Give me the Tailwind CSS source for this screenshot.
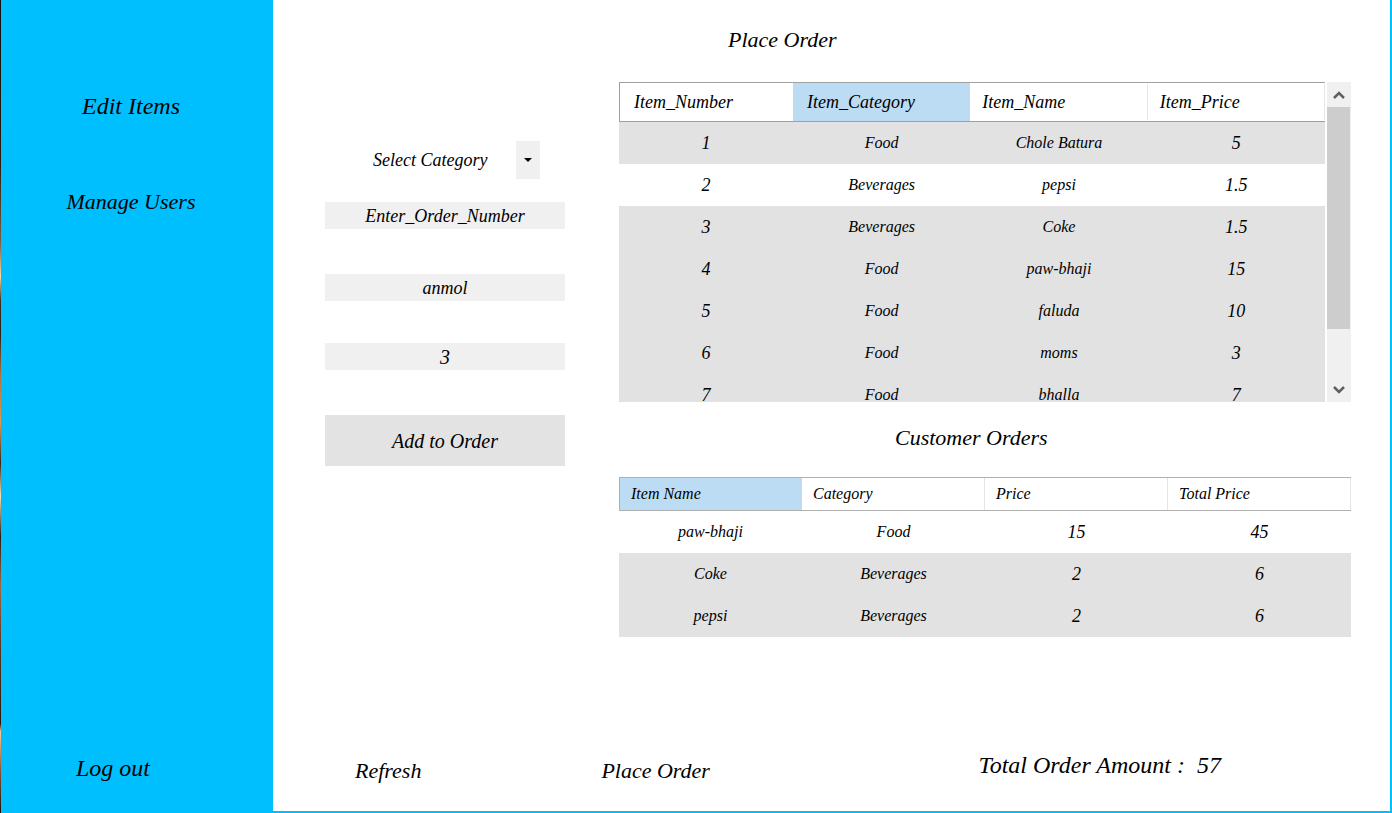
<!DOCTYPE html>
<html lang="en">
<head>
<meta charset="utf-8">
<title>Place Order</title>
<script src="https://cdn.jsdelivr.net/npm/@tailwindcss/browser@4"></script>
</head>
<body class="flex min-h-screen bg-white font-['Liberation_Serif',serif] italic text-black">
  <div class="w-px shrink-0 bg-[linear-gradient(#14100c_0%,#2a1c10_20%,#806040_30%,#ffd9a0_34%,#40301f_37%,#2a2018_41%,#b0703c_46%,#e09850_52%,#3a2418_57%,#ffe0b0_61%,#2a1a14_66%,#a06840_72%,#5a3420_80%,#2a1810_89%,#ffc890_90%,#8a5030_95%,#1a1210_100%)]"></div>
  <aside class="flex w-[272px] shrink-0 flex-col items-start bg-[#00bfff] pt-[90px] pb-[29px] text-[22px] leading-8">
    <nav class="flex flex-col gap-16 self-stretch pr-3">
      <a href="#items" class="text-center text-2xl">Edit Items</a>
      <a href="#users" class="text-center">Manage Users</a>
    </nav>
    <button type="button" class="mt-auto ml-[75px] text-2xl italic">Log out</button>
  </aside>

  <main class="flex min-w-0 flex-1 flex-col border-r-2 border-b-2 border-[#00bfff] pt-6 pr-[39px] pl-[52px]">
    <div class="grid grid-cols-[240px_1fr] gap-x-[54px]">
      <form class="flex flex-col pt-[117px] text-lg">
        <div class="relative mr-[25px] ml-[18px] h-[38px]">
          <select aria-label="Category" class="h-full w-full appearance-none bg-white pl-[30px] italic">
            <option>Select Category</option>
            <option>Food</option>
            <option>Beverages</option>
          </select>
          <span class="pointer-events-none absolute inset-y-0 right-0 flex w-6 items-center justify-center bg-[#f0f0f0]">
            <svg class="h-1 w-2" viewBox="0 0 8 4"><path d="M0 0h8L4 4z"/></svg>
          </span>
        </div>
        <input aria-label="Order number" value="Enter_Order_Number" class="mt-[23px] h-[27px] w-full bg-[#f0f0f0] text-center italic">
        <input aria-label="Customer name" value="anmol" class="mt-[45px] h-[27px] w-full bg-[#f0f0f0] text-center italic">
        <input aria-label="Quantity" value="3" class="mt-[42px] h-[27px] w-full bg-[#f0f0f0] text-center text-xl italic">
        <button type="button" class="mt-[45px] h-[51px] bg-[#e3e3e3] text-xl italic">Add to Order</button>
      </form>

      <div class="min-w-0">
        <h1 class="ml-[109px] text-[22px] leading-8">Place Order</h1>
        <div class="mt-[26px] flex h-80 gap-[2px] overflow-hidden">
          <div class="min-w-0 flex-1 overflow-hidden">
            <table class="w-full table-fixed border-separate border-spacing-0 text-center">
              <thead>
                <tr class="h-10 text-left text-lg leading-6 *:border-y *:border-[#a0a0a0] *:font-normal">
                  <th class="w-[174px] border-l pl-3.5">Item_Number</th>
                  <th class="bg-[#bcdcf4] bg-clip-padding pl-3.5">Item_Category</th>
                  <th class="pl-3"><span class="flex h-9 items-center border-r border-[#e5e5e5]">Item_Name</span></th>
                  <th class="pl-3"><span class="flex h-9 items-center border-r border-[#e5e5e5]">Item_Price</span></th>
                </tr>
              </thead>
              <tbody>
                <tr class="h-[42px] bg-[#e2e2e2]"><td class="text-lg">1</td><td>Food</td><td>Chole Batura</td><td class="text-lg">5</td></tr>
                <tr class="h-[42px]"><td class="text-lg">2</td><td>Beverages</td><td>pepsi</td><td class="text-lg">1.5</td></tr>
                <tr class="h-[42px] bg-[#e2e2e2]"><td class="text-lg">3</td><td>Beverages</td><td>Coke</td><td class="text-lg">1.5</td></tr>
                <tr class="h-[42px] bg-[#e2e2e2]"><td class="text-lg">4</td><td>Food</td><td>paw-bhaji</td><td class="text-lg">15</td></tr>
                <tr class="h-[42px] bg-[#e2e2e2]"><td class="text-lg">5</td><td>Food</td><td>faluda</td><td class="text-lg">10</td></tr>
                <tr class="h-[42px] bg-[#e2e2e2]"><td class="text-lg">6</td><td>Food</td><td>moms</td><td class="text-lg">3</td></tr>
                <tr class="h-[42px] bg-[#e2e2e2]"><td class="text-lg">7</td><td>Food</td><td>bhalla</td><td class="text-lg">7</td></tr>
              </tbody>
            </table>
          </div>
          <div class="flex w-6 flex-col bg-[#f0f0f0]">
            <button type="button" aria-label="Scroll up" class="flex h-[25px] items-center justify-center">
              <svg class="h-2.5 w-3" viewBox="0 0 12 10"><path d="M1 8l5-5 5 5" fill="none" stroke="#606060" stroke-width="2.5"/></svg>
            </button>
            <div class="mr-px h-[222px] bg-[#cdcdcd]"></div>
            <button type="button" aria-label="Scroll down" class="mt-auto flex h-[25px] items-center justify-center">
              <svg class="h-2.5 w-3" viewBox="0 0 12 10"><path d="M1 2l5 5 5-5" fill="none" stroke="#606060" stroke-width="2.5"/></svg>
            </button>
          </div>
        </div>

        <h2 class="mt-5 ml-[276px] text-[22px] leading-8">Customer Orders</h2>
        <table class="mt-[23px] w-full table-fixed border-separate border-spacing-0 text-center">
          <thead>
            <tr class="h-[34px] text-left leading-6 *:border-y *:border-[#b0b0b0] *:pl-[11px] *:font-normal">
              <th class="border-l bg-[#bcdcf4]">Item Name</th>
              <th><span class="flex h-8 items-center border-r border-[#e5e5e5]">Category</span></th>
              <th><span class="flex h-8 items-center border-r border-[#e5e5e5]">Price</span></th>
              <th><span class="flex h-8 items-center border-r border-[#e5e5e5]">Total Price</span></th>
            </tr>
          </thead>
          <tbody>
            <tr class="h-[42px]"><td>paw-bhaji</td><td>Food</td><td class="text-lg">15</td><td class="text-lg">45</td></tr>
            <tr class="h-[42px] bg-[#e2e2e2]"><td>Coke</td><td>Beverages</td><td class="text-lg">2</td><td class="text-lg">6</td></tr>
            <tr class="h-[42px] bg-[#e2e2e2]"><td>pepsi</td><td>Beverages</td><td class="text-lg">2</td><td class="text-lg">6</td></tr>
          </tbody>
        </table>
      </div>
    </div>

    <footer class="mt-auto flex items-end pr-[130px] pb-6 pl-[30px] text-[22px] leading-8">
      <button type="button" class="italic">Refresh</button>
      <button type="button" class="ml-[180px] italic">Place Order</button>
      <p class="mb-1.5 ml-auto flex gap-3 text-2xl leading-8"><span>Total Order Amount :</span><output>57</output></p>
    </footer>
  </main>
</body>
</html>
